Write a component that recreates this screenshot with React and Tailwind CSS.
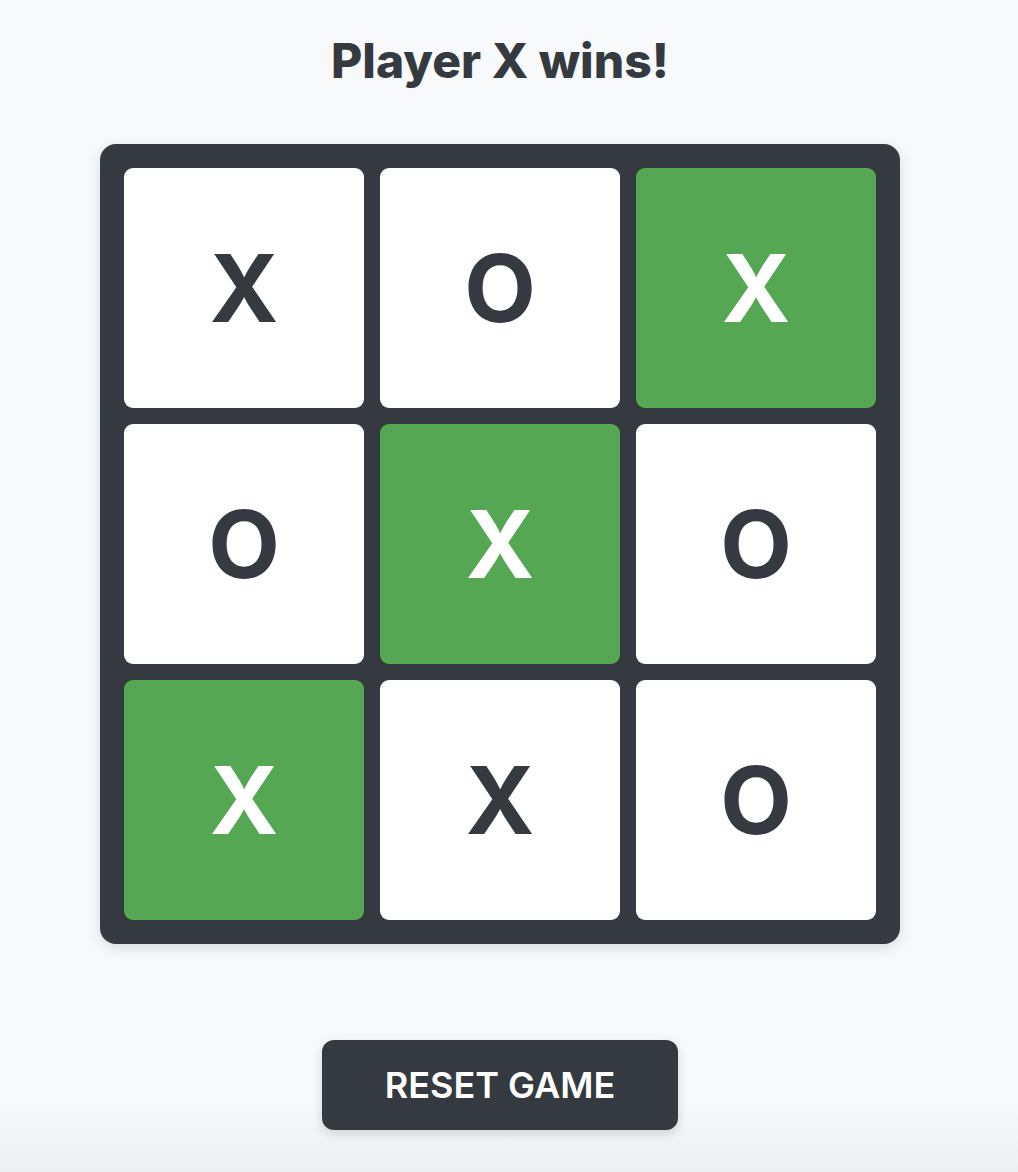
import React from "react";

const board = [
  ["X", false], ["O", false], ["X", true],
  ["O", false], ["X", true], ["O", false],
  ["X", true], ["X", false], ["O", false],
];

export default function App() {
  return (
    <div className="min-h-screen w-full bg-[linear-gradient(to_bottom,#f8f9fa_0%,#f8f9fa_94%,#eeeff1_100%)]" style={{ fontFamily: "Inter, 'Noto Sans', sans-serif" }}>
      <div className="w-[1000px] flex flex-col items-center pt-8">
        <h1 className="text-[48px] leading-[58px] font-extrabold text-[#343a40] m-0">Player X wins!</h1>
        <div className="mt-[54px] w-[800px] h-[800px] bg-[#343a40] rounded-2xl p-6 grid grid-cols-3 gap-4 shadow-[0_4px_14px_rgba(0,0,0,0.12)]">
          {board.map(([v, win], i) => (
            <div
              key={i}
              className={
                win
                  ? "rounded-[9px] bg-[#55a753] text-white flex items-center justify-center text-[93px] font-bold leading-none"
                  : "rounded-[9px] bg-white text-[#343a40] flex items-center justify-center text-[93px] font-bold leading-none"
              }
            >
              {v}
            </div>
          ))}
        </div>
        <button className="mt-24 w-[356px] h-[90px] rounded-xl bg-[#343a40] text-white text-[36px] font-semibold shadow-[0_4px_12px_rgba(0,0,0,0.15)]">
          RESET GAME
        </button>
      </div>
    </div>
  );
}
